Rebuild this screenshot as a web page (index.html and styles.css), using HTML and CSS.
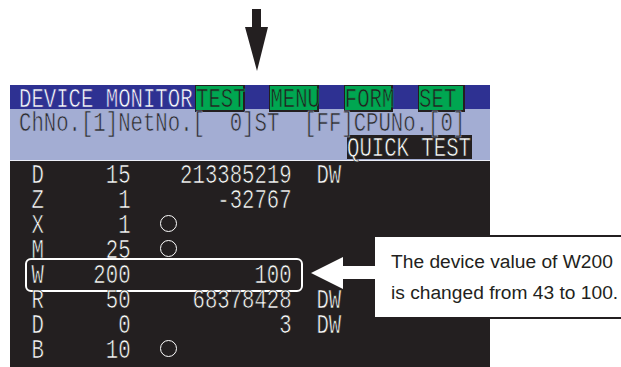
FILE: index.html
```html
<!DOCTYPE html>
<html lang="en">
<head>
    <meta charset="UTF-8">
    <meta name="viewport" content="width=device-width, initial-scale=1.0">
    <title>Device Monitor - Quick Test</title>
    <link rel="stylesheet" href="styles.css">
</head>
<body>

<div class="page">

    <div class="pointer">
        <svg width="23" height="62" viewBox="0 0 23 62">
            <path d="M7 0 H16 V18 H23 L12 62 L0 18 H7 Z" fill="#231f20"/>
        </svg>
    </div>

    <div class="screen">
        <div class="title">
            <span class="title-text tall">DEVICE MONITOR</span>
            <span class="btn"><span class="tall">TEST</span></span>
            <span class="btn"><span class="tall">MENU</span></span>
            <span class="btn"><span class="tall">FORM</span></span>
            <span class="btn"><span class="tall">SET</span></span>
        </div>

        <div class="info">
            <div class="line"><span class="tall">ChNo.[1]NetNo.[  0]ST  [FF]CPUNo.[0]</span></div>
            <div class="line quick-line"><span class="quick"><span class="tall">QUICK TEST</span></span></div>
        </div>

        <div class="devices" id="deviceList">
            <!-- rows are built by the script below -->
        </div>
    </div>

    <svg class="note-arrow" width="68" height="34" viewBox="0 0 68 34">
        <path d="M1 17 L33 1 V10 H68 V23 H33 V33 Z" fill="#fff"/>
    </svg>

    <div class="note">
        The device value of W200<br>
        is changed from 43 to 100.
    </div>

</div>

<script>
    // Device rows (Format: [Device, No., Bit ON, Value, Type])
    const devices = [
        ["D", "15", false, "213385219", "DW"],
        ["Z", "1", false, "-32767", ""],
        ["X", "1", true, "", ""],
        ["M", "25", true, "", ""],
        ["W", "200", false, "100", ""],
        ["R", "50", false, "68378428", "DW"],
        ["D", "0", false, "3", "DW"],
        ["B", "10", true, "", ""]
    ];

    const list = document.getElementById("deviceList");

    devices.forEach(dev => {
        const [name, num, on, value, type] = dev;
        const row = document.createElement("div");
        row.className = "row";

        // the row changed by the test gets a frame
        if (name === "W") row.classList.add("changed");

        row.innerHTML = `
            <span class="dev tall">${name}</span>
            <span class="num tall">${num}</span>
            <span class="bit">${on ? '<span class="lamp"></span>' : ''}</span>
            <span class="val tall">${value}</span>
            <span class="typ tall">${type}</span>
        `;

        list.appendChild(row);
    });
</script>

</body>
</html>
```

FILE: styles.css
```css
* {
    box-sizing: border-box;
}

body {
    margin: 0;
    background: #fff;
    overflow: hidden;
}

.page {
    position: relative;
    width: 621px;
    height: 367px;
}

.pointer {
    height: 85px;
    padding: 9px 0 0 245px;
}

.pointer svg {
    display: block;
}

/* GOT screen: character cells of 1ch x 25px */
.screen {
    margin-left: 10px;
    width: 480px;
    height: 282px;
    overflow: hidden;
    background: #231f20;
    font-family: "Liberation Mono", "DejaVu Sans Mono", monospace;
    font-size: 20.67px;
    line-height: 25px;
    /* a stroke in the background colour makes the strokes thinner */
    -webkit-text-stroke: 0.5px #231f20;
}

/* the screen font is tall and narrow */
.tall {
    display: inline-block;
    transform: translateY(2px) scaleY(1.33);
}

.title {
    display: flex;
    height: 24px;
    padding-left: 9px;
    background: #2e3192;
    color: #fff;
    -webkit-text-stroke-color: #2e3192;
}

.title-text {
    width: 15ch;
}

.btn {
    position: relative;
    width: 4ch;
    height: 27px;
    margin-right: 2ch;
    background: #00a651;
    color: #231f20;
    border: solid #231f20;
    border-width: 1px 2px 2px 1px;
    line-height: 24px;
    -webkit-text-stroke-color: #00a651;
}

.info {
    height: 52px;
    padding-left: 9px;
    background: #a3add3;
    border-bottom: 1px solid #eef0f8;
    color: #2b2b2b;
    -webkit-text-stroke-color: #a3add3;
}

.line {
    height: 25px;
    white-space: pre;
}

.quick-line {
    padding-left: 328px;
}

.quick {
    display: inline-block;
    width: 125px;
    height: 24px;
    line-height: 24px;
    background: #231f20;
    color: #fff;
    -webkit-text-stroke-color: #231f20;
}

.devices {
    padding-left: 9px;
    color: #fff;
}

.row {
    position: relative;
    display: flex;
    align-items: center;
    height: 25px;
}

.dev {
    width: 3ch;
    padding-left: 1ch;
}

.num {
    width: 6ch;
    text-align: right;
}

.bit {
    display: flex;
    align-items: center;
    width: 4ch;
    height: 25px;
}

.lamp {
    width: 17px;
    height: 17px;
    margin-left: 29px;
    border: 1.5px solid #fff;
    border-radius: 50%;
}

.val {
    width: 9ch;
    text-align: right;
}

.typ {
    padding-left: 2ch;
}

.changed::after {
    content: "";
    position: absolute;
    top: -3px;
    left: 6px;
    width: 274px;
    height: 30px;
    border: 2px solid #fff;
    border-radius: 6px;
}

/* callout */
.note-arrow {
    position: absolute;
    left: 310px;
    top: 256px;
}

.note {
    position: absolute;
    left: 375px;
    top: 235px;
    right: 0;
    height: 84px;
    padding: 9px 0 0 16px;
    background: #fff;
    border-top: 2px solid #231f20;
    border-bottom: 2px solid #231f20;
    font-family: "Liberation Sans", Arial, sans-serif;
    font-size: 19.2px;
    line-height: 31px;
    color: #231f20;
    white-space: nowrap;
}
```
